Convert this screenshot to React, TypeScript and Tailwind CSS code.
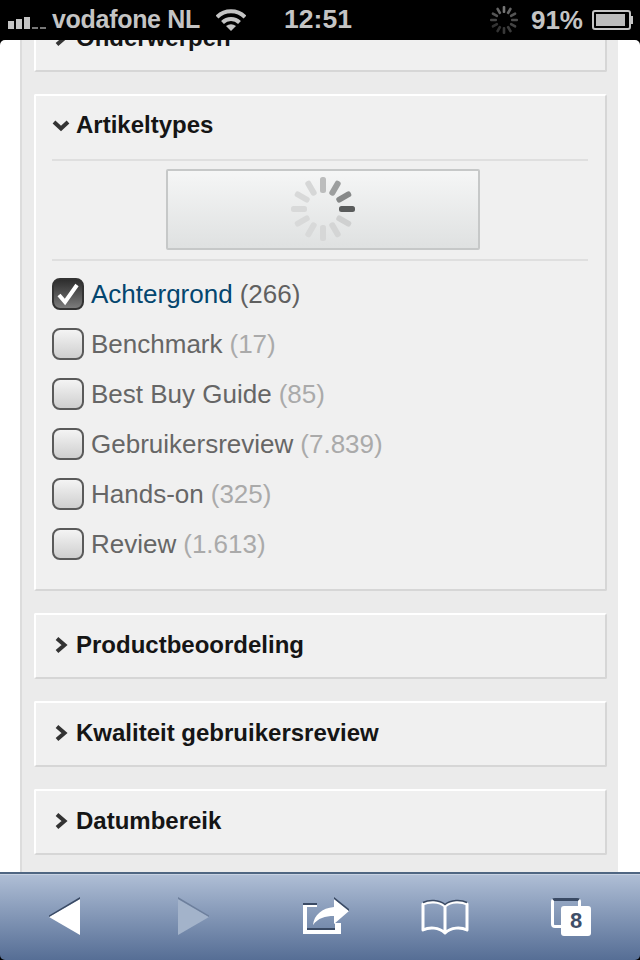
const rows = [
  { name: "Achtergrond", count: "(266)", on: true },
  { name: "Benchmark", count: "(17)" },
  { name: "Best Buy Guide", count: "(85)" },
  { name: "Gebruikersreview", count: "(7.839)" },
  { name: "Hands-on", count: "(325)" },
  { name: "Review", count: "(1.613)" },
];

function Chevron({ open }: { open?: boolean }) {
  return (
    <svg width="18" height="18" viewBox="0 0 18 18" className="shrink-0 blur-[0.4px]" fill="none">
      {open ? (
        <path d="M2 6 L9 12.5 L16 6" stroke="#333" strokeWidth="4" />
      ) : (
        <path d="M5 2.5 L12.5 9 L5 15.5" stroke="#333" strokeWidth="4" />
      )}
    </svg>
  );
}

function Spinner({ size, dark }: { size: number; dark?: boolean }) {
  const shades = dark
    ? ["#777", "#666", "#555", "#4a4a4a", "#444", "#3c3c3c", "#383838", "#333", "#333", "#444", "#555", "#666"]
    : ["#bcbdbd", "#9c9e9e", "#868888", "#5a5c5c", "#cfd0d0", "#d4d5d5", "#d6d7d7", "#d8d9d9", "#d8d9d9", "#d8d9d9", "#d8d9d9", "#d6d7d7"];
  return (
    <svg width={size} height={size} viewBox="-32 -32 64 64" className={dark ? "" : "blur-[0.5px]"}>
      {shades.map((c, i) => (
        <rect key={i} x="-3" y="-32" width="6" height="16" rx="2.5" fill={c} transform={`rotate(${i * 30})`} />
      ))}
    </svg>
  );
}

function Card({ title }: { title: string }) {
  return (
    <div className="mt-[22px] h-[66px] shrink-0 flex items-center gap-[6px] pl-[16px] pb-[2px] bg-[#f0f0f0] border-t-2 border-l-2 border-white border-b-2 border-b-[#d6d6d6] border-r-2 border-r-[#d6d6d6] rounded-[2px]">
      <Chevron />
      <span className="text-[24px] font-bold text-[#151515]">{title}</span>
    </div>
  );
}

function StatusBar() {
  return (
    <div className="h-10 shrink-0 bg-black flex items-center pl-[8px] pr-[7px] text-[#c4c4c4] text-[25px] font-bold">
      <div className="flex items-end gap-[2px] h-[12px] w-[38px] mt-[6px] shrink-0">
        <div className="w-[6px] h-[8px] bg-[#c4c4c4]" />
        <div className="w-[6px] h-[10px] bg-[#c4c4c4]" />
        <div className="w-[6px] h-[12px] bg-[#c4c4c4]" />
        <div className="w-[6px] h-[2px] bg-[#777]" />
        <div className="w-[6px] h-[2px] bg-[#777]" />
      </div>
      <span className="ml-[6px] tracking-[-0.3px]">vodafone NL</span>
      <svg width="30" height="22" viewBox="0 0 30 22" fill="none" className="ml-[16px] shrink-0">
        <path d="M1 8 A20 20 0 0 1 29 8" stroke="#c4c4c4" strokeWidth="4" />
        <path d="M6.5 13.5 A12 12 0 0 1 23.5 13.5" stroke="#c4c4c4" strokeWidth="4" />
        <path d="M15 22 L10 17 Q15 13.5 20 17 Z" fill="#c4c4c4" />
      </svg>
      <span className="ml-[38px] text-[26.5px]">12:51</span>
      <div className="ml-auto flex items-center">
        <Spinner size={28} dark />
        <span className="ml-[13px] text-[26px]">91%</span>
        <div className="ml-[9px] w-[39px] h-[20px] border-2 border-[#c4c4c4] rounded-[3px] p-[2px] shrink-0">
          <div className="h-full w-[92%] bg-[#bcbcbc]" />
        </div>
        <div className="w-[2px] h-[8px] bg-[#c4c4c4]" />
      </div>
    </div>
  );
}

function Toolbar() {
  return (
    <div className="h-[88px] shrink-0 bg-black">
      <div className="h-full border-t-2 border-t-[#4f6682] rounded-b-[5px] bg-gradient-to-b from-[#b0bfd6] to-[#566e95] flex flex-col">
        <div className="h-[1px] bg-[#c8d2e2]" />
        <div className="flex-1 flex items-center pl-[49px] -mt-[1px]">
          <svg width="31" height="40" viewBox="0 0 31 40" className="shrink-0">
            <path d="M31 2 L0 20 L31 38 Z" fill="#fff" />
            <path d="M31 0 L0 18.5 L0 20 L31 2 Z" fill="#3a4a64" />
          </svg>
          <svg width="31" height="40" viewBox="0 0 31 40" className="ml-[98px] shrink-0">
            <path d="M0 2 L31 20 L0 38 Z" fill="#a3b3ca" />
            <path d="M0 0 L31 18.5 L31 20 L0 2 Z" fill="#6d7f9c" />
          </svg>
          <svg width="47" height="40" viewBox="0 0 47 40" className="ml-[93px] shrink-0 -mt-[2px]" fill="none">
            <path d="M1 9 H15 V11 H5 V32 H33 V27 H39 V38 H1 Z" fill="#fff" />
            <path d="M1 7 H15 V9 H1 Z M5 32 H33 V34 H5 Z" fill="#3a4a64" />
            <path d="M11 29 C12 19 20 12 32 11 V3 L47 15 L32 28 V20 C23 20 16 22 11 29 Z" fill="#fff" />
            <path d="M32 1 L47 13 L47 15 L32 3 Z" fill="#3a4a64" />
          </svg>
          <svg width="48" height="36" viewBox="0 0 48 36" className="ml-[72px] shrink-0" fill="none">
            <path d="M24 7 C18 2 8 2 2 5 V31 C8 28 18 28 24 34 C30 28 40 28 46 31 V5 C40 2 30 2 24 7 Z M24 7 V34" stroke="#fff" strokeWidth="3" strokeLinejoin="round" />
            <path d="M2 3.5 C8 0.5 18 0.5 24 5.5 C30 0.5 40 0.5 46 3.5" stroke="#3a4a64" strokeWidth="1.5" />
          </svg>
          <div className="relative ml-[82px] w-[40px] h-[38px] shrink-0">
            <div className="w-[30px] h-[30px] border-[3px] border-white border-t-[#3a4a64] rounded-[4px]" />
            <div className="absolute right-0 bottom-0 w-[30px] h-[30px] rounded-[3px] bg-white flex items-center justify-center text-[22px] font-bold text-[#3f4f68] leading-none">
              8
            </div>
          </div>
        </div>
      </div>
    </div>
  );
}

export default function App() {
  return (
    <div className="w-[640px] h-[960px] flex flex-col overflow-hidden bg-black font-['Liberation_Sans',sans-serif]">
      <StatusBar />
      <div className="flex-1 min-h-0 overflow-hidden bg-white rounded-t-[5px] pl-[20px] pr-[22px]">
        <div className="h-full flex flex-col border-l-2 border-l-[#dcdcdc] bg-[#ebebeb] pl-[12px] pr-[11px]">
          <div className="-mt-[34px] h-[66px] shrink-0 flex items-center gap-[6px] pl-[16px] pb-[2px] bg-[#f0f0f0] border-t-2 border-l-2 border-white border-b-2 border-b-[#d6d6d6] border-r-2 border-r-[#d6d6d6] rounded-[2px]">
            <Chevron />
            <span className="text-[24px] font-bold text-[#151515]">Onderwerpen</span>
          </div>

          <div className="mt-[22px] h-[497px] shrink-0 bg-[#f0f0f0] border-t-2 border-l-2 border-white border-b-2 border-b-[#d6d6d6] border-r-2 border-r-[#d6d6d6] rounded-[2px] pl-[16px] pr-[17px]">
            <div className="h-[65px] pb-[5px] flex items-center gap-[6px] border-b-2 border-b-[#dfdfdf]">
              <Chevron open />
              <span className="text-[24px] font-bold text-[#151515]">Artikeltypes</span>
            </div>
            <div className="h-[100px] pb-[2px] flex items-center justify-center pl-[6px] border-b-2 border-b-[#dfdfdf]">
              <div className="w-[314px] h-[81px] border-2 border-[#c6c8c8] rounded-[2px] bg-gradient-to-b from-[#f5f6f6] to-[#dfe1e1] flex items-center justify-center">
                <Spinner size={64} />
              </div>
            </div>
            <div className="pt-[8px]">
              {rows.map((r) => (
                <div key={r.name} className="h-[50px] flex items-center gap-[7px] text-[26px]">
                  {r.on ? (
                    <div className="w-[32px] h-[32px] shrink-0 rounded-[8px] border-2 border-[#333] bg-gradient-to-b from-[#2e2e2e] to-[#7c7c7c] flex items-center justify-center">
                      <svg width="26" height="26" viewBox="0 0 26 26" fill="none">
                        <path d="M4 14 L10 21 L22 4" stroke="#fff" strokeWidth="4" />
                      </svg>
                    </div>
                  ) : (
                    <div className="w-[32px] h-[32px] shrink-0 rounded-[8px] border-2 border-[#5a5a5a] bg-gradient-to-b from-[#f4f4f4] to-[#cfcfcf]" />
                  )}
                  <span className={r.on ? "text-[#04466f]" : "text-[#666666]"}>{r.name}</span>
                  <span className={r.on ? "text-[#606060]" : "text-[#aaaaaa]"}>{r.count}</span>
                </div>
              ))}
            </div>
          </div>

          <Card title="Productbeoordeling" />
          <Card title="Kwaliteit gebruikersreview" />
          <Card title="Datumbereik" />
        </div>
      </div>
      <Toolbar />
    </div>
  );
}
